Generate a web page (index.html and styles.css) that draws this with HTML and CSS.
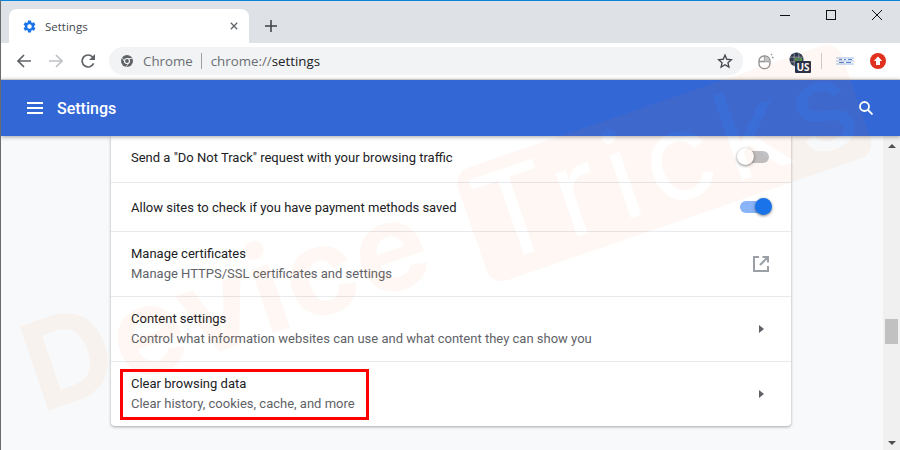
FILE: index.html
```html
<!DOCTYPE html>
<html lang="en">
<head>
<meta charset="utf-8">
<title>Settings</title>
<link rel="stylesheet" href="styles.css">
</head>
<body>
<div class="app">
  <div class="titlebar">
    <div class="tab">
      <svg class="tab-gear" viewBox="0 0 24 24"><path d="M19.14 12.94c.04-.3.06-.61.06-.94 0-.32-.02-.64-.07-.94l2.03-1.58a.49.49 0 0 0 .12-.61l-1.92-3.32a.49.49 0 0 0-.59-.22l-2.39.96c-.5-.38-1.03-.7-1.62-.94l-.36-2.54a.48.48 0 0 0-.48-.41h-3.84c-.24 0-.43.17-.47.41l-.36 2.54c-.59.24-1.13.57-1.62.94l-2.39-.96a.48.48 0 0 0-.59.22L2.74 8.87c-.12.21-.08.47.12.61l2.03 1.58c-.05.3-.09.63-.09.94s.02.64.07.94l-2.03 1.58a.49.49 0 0 0-.12.61l1.92 3.32c.12.22.37.29.59.22l2.39-.96c.5.38 1.03.7 1.62.94l.36 2.54c.05.24.24.41.48.41h3.84c.24 0 .44-.17.47-.41l.36-2.54c.59-.24 1.13-.56 1.62-.94l2.39.96c.22.08.47 0 .59-.22l1.92-3.32c.12-.22.07-.47-.12-.61l-2.01-1.58zM12 15.6A3.6 3.6 0 1 1 12 8.4a3.6 3.6 0 0 1 0 7.2z"/></svg>
      <span class="tab-title">Settings</span>
      <svg class="tab-close" viewBox="0 0 10 10"><path d="M1 1l8 8M9 1L1 9"/></svg>
    </div>
    <svg class="new-tab" viewBox="0 0 12 12"><path d="M6 0v12M0 6h12"/></svg>
    <div class="window-controls">
      <svg class="win-btn" viewBox="0 0 10 10"><path d="M0 5.5h10"/></svg>
      <svg class="win-btn" viewBox="0 0 10 10"><rect x=".5" y=".5" width="9" height="9"/></svg>
      <svg class="win-btn" viewBox="0 0 10 10"><path d="M0 0l10 10M10 0L0 10"/></svg>
    </div>
  </div>

  <div class="toolbar">
    <svg class="nav-icon" viewBox="0 0 16 16"><path d="M15 8H2M8 2L2 8l6 6"/></svg>
    <svg class="nav-icon nav-disabled" viewBox="0 0 16 16"><path d="M1 8h13M8 2l6 6-6 6"/></svg>
    <svg class="nav-icon" viewBox="0 0 16 16"><path d="M13.6 10.4A6 6 0 1 1 12.6 4"/><path class="nav-fill" d="M15 1v6H9z"/></svg>
    <div class="omnibox">
      <svg class="chrome-icon" viewBox="0 0 24 24"><circle cx="12" cy="12" r="12"/><circle class="chrome-ring" cx="12" cy="12" r="5"/><path class="chrome-line" d="M12 7h11M8 15L2.5 5.5M15.5 15.5L10 24"/></svg>
      <span class="omni-origin">Chrome</span>
      <span class="omni-sep"></span>
      <span class="omni-url"><span class="omni-scheme">chrome://</span>settings</span>
      <svg class="star" viewBox="0 0 24 24"><path d="M12 3.2l2.7 6.2 6.8.6-5.1 4.5 1.5 6.6L12 17.6l-5.9 3.5 1.5-6.6L2.5 10l6.8-.6z"/></svg>
    </div>
    <div class="extensions">
      <svg class="ext-mouse" viewBox="0 0 16 16"><rect x="1" y="3" width="11" height="12.6" rx="5"/><path d="M1 8.5h11M6.5 3v5.5"/><path class="ext-mouse-fill" d="M6.5 3.4a5 5 0 0 1 5 5H6.5z"/><path d="M13 2l1-1M14 4.5h1.5"/></svg>
      <div class="ext-vpn">
        <svg class="ext-globe" viewBox="0 0 16 16"><circle cx="8" cy="8" r="7.5"/><path class="globe-grid" d="M.5 5.5h15M.5 10.5h15M5.5 0v16M10.5 0v16"/><rect class="globe-green" x="6.5" y="6.5" width="3" height="3"/><rect class="globe-green" x="11" y="6.5" width="3" height="3"/></svg>
        <span class="ext-badge">US</span>
      </div>
      <span class="ext-sep"></span>
      <svg class="ext-lines" viewBox="0 0 18 8"><path d="M0 1h18M0 4h18M0 7h18"/><path class="ext-lines-dark" d="M3 2.5h3M8 2.5h2M12 2.5h4M3 5.5h5M10 5.5h5"/></svg>
      <svg class="ext-up" viewBox="0 0 16 16"><circle cx="8" cy="8" r="8"/><path class="ext-up-arrow" d="M8 3.5L12.2 8H10v4H6V8H3.8z"/></svg>
    </div>
  </div>

  <header class="header">
    <svg class="menu-icon" viewBox="0 0 16 12"><path d="M0 1h16M0 6h16M0 11h16"/></svg>
    <span class="header-title">Settings</span>
    <svg class="search-icon" viewBox="0 0 14 14"><circle cx="5.5" cy="5.5" r="4.5"/><path d="M9 9l4.5 4.5"/></svg>
  </header>

  <div class="main">
    <div class="content">
      <section class="card">
        <div class="row row-first">
          <span class="row-label">Send a "Do Not Track" request with your browsing traffic</span>
          <span class="toggle"><span class="toggle-track"></span><span class="toggle-knob"></span></span>
        </div>
        <div class="row row-single">
          <span class="row-label">Allow sites to check if you have payment methods saved</span>
          <span class="toggle toggle-on"><span class="toggle-track"></span><span class="toggle-knob"></span></span>
        </div>
        <div class="row">
          <div class="row-text">
            <span class="row-label">Manage certificates</span>
            <span class="row-sub">Manage HTTPS/SSL certificates and settings</span>
          </div>
          <svg class="open-icon" viewBox="0 0 18 18"><path d="M7 2H2v14h14v-5M10.5 2H16v5.5M16 2L8 10"/></svg>
        </div>
        <div class="row">
          <div class="row-text">
            <span class="row-label">Content settings</span>
            <span class="row-sub">Control what information websites can use and what content they can show you</span>
          </div>
          <span class="chevron"></span>
        </div>
        <div class="row row-marked">
          <div class="row-text">
            <span class="row-label">Clear browsing data</span>
            <span class="row-sub">Clear history, cookies, cache, and more</span>
          </div>
          <span class="chevron"></span>
          <span class="annotation"></span>
        </div>
      </section>
    </div>
    <div class="scrollbar">
      <span class="scroll-arrow scroll-arrow-up"></span>
      <span class="scroll-thumb"></span>
      <span class="scroll-arrow scroll-arrow-down"></span>
    </div>
  </div>

  <svg class="watermark" viewBox="0 0 900 450" aria-hidden="true">
    <defs>
      <mask id="tricks-cut" maskUnits="userSpaceOnUse" x="-200" y="-200" width="1400" height="900">
        <rect x="-200" y="-200" width="1400" height="900" fill="#fff"/>
        <text class="wm-tricks wm-tricks-cut" x="492" y="266" transform="rotate(-19 492 266)">Tricks</text>
      </mask>
    </defs>
    <g class="wm-peach">
      <text class="wm-device" x="41" y="413" transform="rotate(-19 41 413)">Device</text>
      <g mask="url(#tricks-cut)">
        <rect x="453" y="173" width="406" height="119" rx="16" transform="rotate(-19 453 173)"/>
      </g>
    </g>
    <text class="wm-tricks wm-tricks-light" x="492" y="266" transform="rotate(-19 492 266)">Tricks</text>
  </svg>
</div>
</body>
</html>
```
FILE: styles.css
```css
* { box-sizing: border-box; }
html, body { margin: 0; padding: 0; }
body { width: 900px; height: 450px; overflow: hidden; background: #fff; font-family: Roboto, "Liberation Sans", sans-serif; }
svg { display: block; flex: none; }

.app { position: relative; width: 900px; height: 450px; display: flex; flex-direction: column; border-top: 1px solid #0a84d8; border-left: 1px solid #6b6b6b; overflow: hidden; }

.titlebar { height: 42px; flex: none; background: #dee1e6; display: flex; align-items: flex-end; padding-left: 8px; }
.tab { width: 240px; height: 34px; background: #fff; border-radius: 8px 8px 0 0; display: flex; align-items: center; padding: 0 11px 0 13px; }
.tab-gear { width: 15px; height: 15px; fill: #1a73e8; }
.tab-title { margin-left: 8px; flex: 1; font: 11.5px "Open Sans", sans-serif; color: #45494f; }
.tab-close { width: 8px; height: 8px; fill: none; stroke: #5f6368; stroke-width: 1.6; }
.new-tab { width: 12px; height: 12px; margin: 0 0 11px 16px; fill: none; stroke: #3c4043; stroke-width: 1.5; }
.window-controls { margin-left: auto; align-self: flex-start; display: flex; gap: 36px; padding: 9px 18px 0 0; }
.win-btn { width: 10px; height: 10px; fill: none; stroke: #111; stroke-width: 1; }

.toolbar { height: 36px; flex: none; background: #fff; display: flex; align-items: center; padding-left: 15px; }
.nav-icon { width: 16px; height: 16px; margin-right: 16px; fill: none; stroke: #5f6368; stroke-width: 1.7; }
.nav-disabled { stroke: #bdc1c6; }
.nav-fill { fill: #5f6368; stroke: none; }
.omnibox { width: 634px; height: 28px; margin-left: -3px; background: #f1f3f4; border-radius: 14px; display: flex; align-items: center; padding: 0 10px 0 12px; }
.chrome-icon { width: 12px; height: 12px; fill: #5f6368; }
.chrome-ring { fill: #5f6368; stroke: #f1f3f4; stroke-width: 2.4; }
.chrome-line { stroke: #f1f3f4; stroke-width: 1.6; fill: none; }
.omni-origin { margin-left: 10px; font: 13.3px "Open Sans", sans-serif; color: #6a6e73; }
.omni-sep { width: 1px; height: 16px; background: #9aa0a6; margin: 0 9px 0 8px; }
.omni-url { font: 13.3px "Open Sans", sans-serif; color: #202124; flex: 1; }
.omni-scheme { color: #6a6e73; }
.star { width: 16px; height: 16px; fill: none; stroke: #45494f; stroke-width: 2; }

.extensions { display: flex; align-items: center; margin-left: 15px; }
.ext-mouse { width: 16px; height: 18px; fill: none; stroke: #8f8f8f; stroke-width: 1.3; }
.ext-mouse-fill { fill: #c4c4c4; stroke: none; }
.ext-vpn { position: relative; width: 16px; height: 16px; margin: 0 0 2px 15px; }
.ext-globe { width: 15px; height: 15px; fill: #24344d; }
.globe-grid { stroke: #e8edf2; stroke-width: .5; fill: none; }
.globe-green { fill: #4e9b47; }
.ext-badge { position: absolute; left: 6px; top: 9px; width: 16px; height: 12px; background: #1f2d47; border-radius: 1px; color: #fff; font: 700 10px/12px "Open Sans", sans-serif; text-align: center; }
.ext-sep { width: 1px; height: 16px; background: #cfcfcf; margin: 0 14px 0 16px; }
.ext-lines { width: 18px; height: 8px; fill: none; stroke: #9dbce8; stroke-width: 1; }
.ext-lines-dark { stroke: #5b86c8; }
.ext-up { width: 16px; height: 16px; margin-left: 16px; fill: #e0301e; }
.ext-up-arrow { fill: #fff; }

.header { height: 57px; flex: none; position: relative; z-index: 2; background: #3367d6; border-top: 1px solid #c9c4c0; display: flex; align-items: center; padding: 0 27px 0 26px; box-shadow: 0 1px 4px rgba(0,0,0,.35); color: #fff; }
.menu-icon { width: 16px; height: 12px; fill: none; stroke: #fff; stroke-width: 2; }
.header-title { margin-left: 14px; font: 500 16px Roboto, sans-serif; flex: 1; }
.search-icon { width: 14px; height: 14px; fill: none; stroke: #fff; stroke-width: 1.8; }

.main { flex: 1; min-height: 0; display: flex; background: #f8f9fa; }
.content { flex: 1; padding: 0 92px 24px 110px; display: flex; align-items: flex-end; }
.card { width: 680px; background: #fff; border-radius: 0 0 4px 4px; box-shadow: 0 1px 3px rgba(60,64,67,.45); }

.row { position: relative; height: 65px; display: flex; align-items: center; padding: 0 22px 0 20px; border-top: 1px solid #e8eaed; justify-content: space-between; }
.row-first { height: 46px; border-top: 0; padding-bottom: 4px; }
.row-single { height: 49px; }
.row-text { display: flex; flex-direction: column; gap: 5px; padding-bottom: 2px; }
.row-label { font-size: 13px; line-height: 15px; color: #202124; }
.row-sub { font-size: 13px; line-height: 15px; color: #5f6368; }

.toggle { position: relative; display: block; width: 34px; height: 18px; margin-right: -2px; }
.toggle-track { position: absolute; left: 1px; top: 3px; width: 31px; height: 12px; border-radius: 6px; background: #bdc1c6; }
.toggle-knob { position: absolute; left: 0; top: 0; width: 17px; height: 17px; border-radius: 50%; background: #fff; box-shadow: 0 1px 3px rgba(0,0,0,.5); }
.toggle-on .toggle-track { left: 3px; background: #8ab4f8; }
.toggle-on .toggle-knob { left: 18px; background: #1a73e8; }

.open-icon { width: 18px; height: 18px; margin-right: -1px; fill: none; stroke: #9aa0a6; stroke-width: 2; }
.chevron { width: 0; height: 0; margin-right: 5px; border-left: 5px solid #5f6368; border-top: 4.5px solid transparent; border-bottom: 4.5px solid transparent; }
.annotation { position: absolute; left: 9px; top: 7px; width: 249px; height: 51px; border: 3px solid #f00; }

.scrollbar { width: 17px; flex: none; background: #f0f0f0; position: relative; display: flex; flex-direction: column; align-items: center; justify-content: space-between; padding: 8px 0 5px; }
.scroll-arrow { width: 0; height: 0; border-left: 4px solid transparent; border-right: 4px solid transparent; }
.scroll-arrow-up { border-bottom: 4px solid #505050; }
.scroll-arrow-down { border-top: 4px solid #505050; }
.scroll-thumb { position: absolute; top: 183px; left: 2px; width: 13px; height: 25px; background: #c1c1c1; }

.watermark { position: absolute; left: -1px; top: -1px; width: 900px; height: 450px; z-index: 5; pointer-events: none; }
.wm-peach { fill: #f0823c; opacity: .055; }
.wm-device { font: 700 122px Inter, "Liberation Sans", sans-serif; letter-spacing: 2px; }
.wm-tricks { font: 400 122px Inter, "Liberation Sans", sans-serif; letter-spacing: 9px; }
.wm-tricks-cut { fill: #000; }
.wm-tricks-light { fill: #fff; opacity: .04; }
```
